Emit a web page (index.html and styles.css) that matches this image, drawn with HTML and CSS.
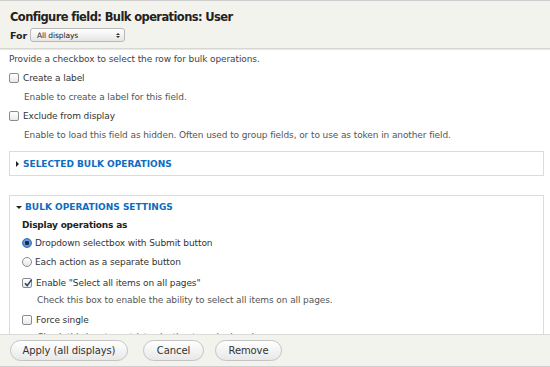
FILE: index.html
```html
<!DOCTYPE html>
<html>
<head>
<meta charset="utf-8">
<link rel="stylesheet" href="styles.css">
</head>
<body>
<div class="dialog">
  <div class="header">
    <h1 class="title">Configure field: Bulk operations: User</h1>
    <div class="for-row">
      <span class="for-label">For</span>
      <span class="select"><span class="select-text">All displays</span><span class="select-arrows"><span class="arr-up"></span><span class="arr-down"></span></span></span>
    </div>
  </div>
  <div class="content">
    <div class="intro">Provide a checkbox to select the row for bulk operations.</div>
    <div class="item">
      <div class="opt"><span class="cb"></span>Create a label</div>
      <div class="desc">Enable to create a label for this field.</div>
    </div>
    <div class="item">
      <div class="opt"><span class="cb"></span>Exclude from display</div>
      <div class="desc">Enable to load this field as hidden. Often used to group fields, or to use as token in another field.</div>
    </div>
    <div class="fieldset collapsed">
      <div class="legend"><span class="tri-right"></span>SELECTED BULK OPERATIONS</div>
    </div>
    <div class="fieldset open">
      <div class="legend"><span class="tri-down"></span>BULK OPERATIONS SETTINGS</div>
      <div class="fs-body">
        <div class="group-title">Display operations as</div>
        <div class="opt radio-opt first"><span class="radio checked"></span>Dropdown selectbox with Submit button</div>
        <div class="opt radio-opt"><span class="radio"></span>Each action as a separate button</div>
        <div class="item2">
          <div class="opt"><span class="cb checked"><svg viewBox="0 0 10 10" width="10" height="10"><path d="M2 5.2 L4.2 7.6 L8.6 1.6" fill="none" stroke="#2a3f6a" stroke-width="1.6"/></svg></span>Enable "Select all items on all pages"</div>
          <div class="desc">Check this box to enable the ability to select all items on all pages.</div>
        </div>
        <div class="item2 last">
          <div class="opt"><span class="cb"></span>Force single</div>
          <div class="desc">Check this box to restrict selection to a single value.</div>
        </div>
      </div>
    </div>
  </div>
  <div class="footer">
    <button class="btn btn-apply">Apply (all displays)</button>
    <button class="btn btn-cancel">Cancel</button>
    <button class="btn btn-remove">Remove</button>
  </div>
</div>
</body>
</html>
```
FILE: styles.css
```css
* { box-sizing: border-box; }
html, body { margin: 0; padding: 0; }
body {
  width: 550px;
  height: 367px;
  overflow: hidden;
  font-family: "DejaVu Sans", Verdana, sans-serif;
  font-size: 9px;
  letter-spacing: -0.1px;
  color: #333;
  background: #fff;
}
.dialog {
  display: flex;
  flex-direction: column;
  height: 367px;
  border-top: 1px solid #cfcfcf;
}
.header {
  background: #f3f3ed;
  border-bottom: 1px solid #d8d8d2;
  box-shadow: 0 1px 0 #e8e8e4;
  height: 48px;
  padding: 8px 10px 0 10px;
  flex: none;
}
.title {
  margin: 0;
  font-size: 11.5px;
  font-weight: bold;
  line-height: 16px;
  color: #222;
  letter-spacing: -0.6px;
}
.for-row {
  display: flex;
  align-items: center;
  margin-top: 3px;
  gap: 3px;
}
.for-label { font-weight: bold; font-size: 9.5px; color: #222; }
.select {
  display: flex;
  align-items: center;
  justify-content: space-between;
  width: 95px;
  height: 14px;
  border: 1px solid #b8b8b8;
  border-radius: 3px;
  background: linear-gradient(#ffffff, #e6e6e6);
  padding: 0 4px 0 6px;
  font-size: 7.5px;
  color: #222;
}
.select-arrows {
  display: flex;
  flex-direction: column;
  gap: 1px;
}
.arr-up {
  width: 0; height: 0;
  border-left: 2px solid transparent;
  border-right: 2px solid transparent;
  border-bottom: 2px solid #333;
}
.arr-down {
  width: 0; height: 0;
  border-left: 2px solid transparent;
  border-right: 2px solid transparent;
  border-top: 2px solid #333;
}
.content {
  flex: 1;
  min-height: 0;
  overflow: hidden;
  padding: 3px 6px 0 9px;
}
.intro { line-height: 14px; color: #444; }
.item { margin-top: 5px; }
.opt {
  display: flex;
  align-items: center;
  line-height: 14px;
  color: #333;
}
.desc {
  margin-top: 5px;
  padding-left: 15px;
  line-height: 14px;
  color: #555;
}
.cb {
  width: 10px;
  height: 10px;
  border: 1px solid #8c8c8c;
  border-radius: 2px;
  background: linear-gradient(#fff, #e9e9e9);
  margin-right: 4px;
  position: relative;
  flex: none;
}
.cb svg { position: absolute; left: 0; top: -1px; }
.radio {
  width: 10px;
  height: 10px;
  border: 1px solid #8c8c8c;
  border-radius: 50%;
  background: linear-gradient(#fff, #e6e6e6);
  margin-right: 3px;
  flex: none;
}
.radio.checked {
  border-color: #3b6fb5;
  background: radial-gradient(circle, #1a2d4d 0 2px, #6fa0e0 2.5px, #3d79c9 5px);
}
.fieldset {
  border: 1px solid #dcdcdc;
}
.fieldset.collapsed { height: 25px; margin-top: 9px; }
.fieldset.collapsed .legend { height: 23px; }
.fieldset.open { margin-top: 19px; }
.fieldset.open .legend { height: 22px; }
.legend {
  display: flex;
  align-items: center;
  padding-left: 6px;
  font-weight: bold;
  color: #0d6dbf;
  letter-spacing: 0;
}
.tri-right {
  width: 0; height: 0;
  border-top: 3px solid transparent;
  border-bottom: 3px solid transparent;
  border-left: 3px solid #222;
  margin-right: 4px;
}
.tri-down {
  width: 0; height: 0;
  border-left: 3px solid transparent;
  border-right: 3px solid transparent;
  border-top: 3px solid #222;
  margin-right: 3px;
}
.fs-body { padding: 0 12px 0 12px; }
.group-title { font-weight: bold; line-height: 14px; color: #222; letter-spacing: -0.2px; }
.radio-opt { margin-top: 5px; }
.radio-opt.first { margin-top: 4px; }
.item2 { margin-top: 7px; }
.item2.last { margin-top: 6px; }
.item2 .desc { padding-left: 15px; margin-top: 3px; }
.footer {
  flex: none;
  height: 33px;
  background: #f3f3ed;
  border-top: 1px solid #dcdcd6;
  border-bottom: 1px solid #cfcfcf;
  display: flex;
  align-items: center;
  padding: 0 10px;
}
.btn {
  font-family: inherit;
  font-size: 10px;
  letter-spacing: -0.1px;
  color: #333;
  height: 21px;
  padding: 0;
  border: 1px solid #c4c4c4;
  border-radius: 11px;
  background: linear-gradient(#ffffff, #e8e8e8);
  text-align: center;
}
.btn-apply { width: 118px; }
.btn-cancel { width: 61px; margin-left: 15px; }
.btn-remove { width: 67px; margin-left: 11px; }
```
